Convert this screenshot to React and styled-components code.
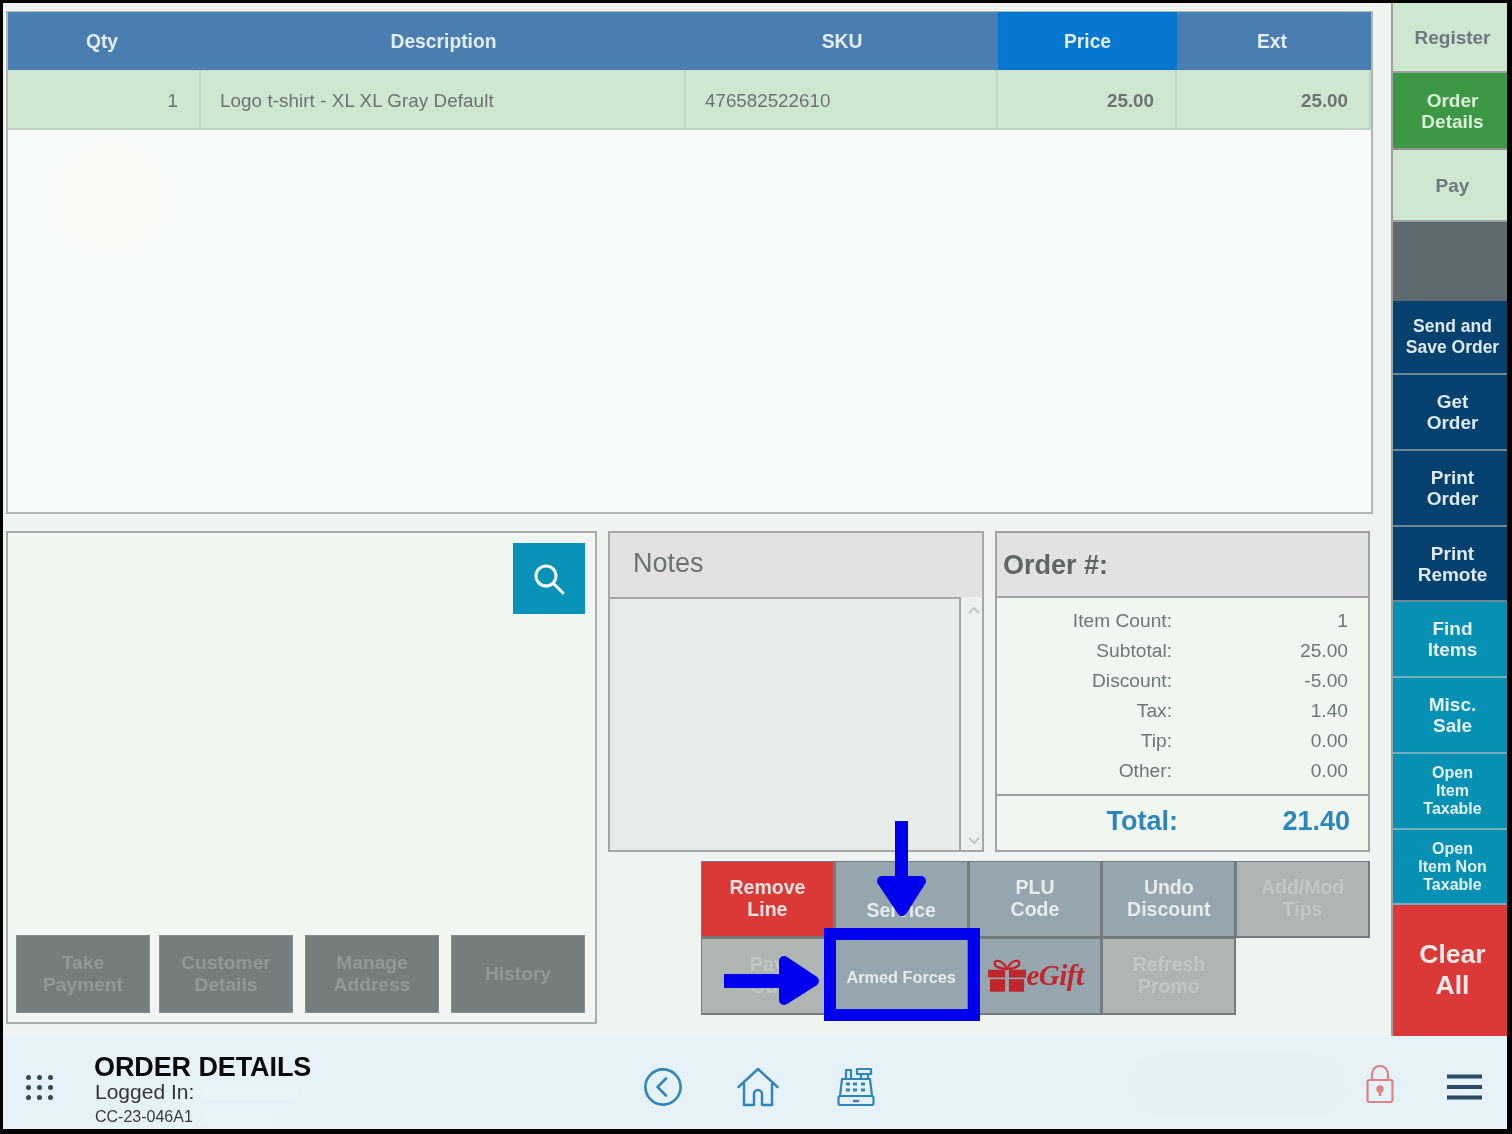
import React from "react";
import styled, { createGlobalStyle } from "styled-components";

const Global = createGlobalStyle`
  html, body { margin: 0; padding: 0; background: #000; }
  * { box-sizing: border-box; }
  body { font-family: "Liberation Sans", Arial, sans-serif; }
`;

const Frame = styled.div`
  position: relative; width: 1512px; height: 1134px; background: #000; overflow: hidden;
  padding: 3px 5px 5px 3px;
`;
const Screen = styled.div`
  height: 100%; display: flex; flex-direction: column; background: #f0f4f1; filter: blur(0.55px);
`;
const Body = styled.div`display: flex; height: 1033px;`;
const Main = styled.main`width: 1388px; padding: 8px 0 0 3px; display: flex; flex-direction: column;`;

const OrderTable = styled.section`
  position: relative; width: 1367px; height: 503px; background: #f8fcf8; border: 2px solid #b3b7b3; border-top-width: 1px; padding-right: 2px;
`;
const Glow = styled.div`
  position: absolute; left: 42px; top: 125px; width: 120px; height: 120px; border-radius: 50%;
  background: radial-gradient(circle, #f8faf3 0%, #f8fbf6 60%, transparent 72%);
`;
const TableRow = styled.div`
  position: relative; display: grid; grid-template-columns: 193px 485px 312px 179px 194px; height: ${p => p.$h}px;
`;
const HeadCell = styled.div`
  display: flex; align-items: center; justify-content: center; color: #e4eef5; font-weight: 700; font-size: 19.3px;
  padding: 2px ${p => p.$shift || 0}px 0 0;
  background: ${p => (p.$active ? "#0577d0" : "#4b7eb0")};
`;
const Cell = styled.div`
  display: flex; align-items: center; background: #cfe6d0; color: #697670; font-size: 18.8px;
  border-right: 2px solid #c3d6c5; border-bottom: 2px solid #c5d2c6; border-top: 1px solid #c9dccb;
  justify-content: ${p => (p.$right ? "flex-end" : "flex-start")};
  padding: ${p => (p.$right ? `2px ${p.$pad}px 0 0` : "2px 0 0 19px")};
  font-weight: ${p => (p.$bold ? 700 : 400)};
  letter-spacing: ${p => p.$track || 0}px;
`;

const Lower = styled.div`display: flex; margin-top: 17px;`;
const SearchPanel = styled.section`
  width: 591px; height: 493px; background: #f1f7f0; border: 2px solid #a9adaa;
  padding: 10px 10px 9px 8px; display: flex; flex-direction: column; justify-content: space-between;
`;
const SearchButton = styled.button`
  align-self: flex-end; width: 72px; height: 71px; border: 0; padding: 0; background: #0892b8; display: flex; align-items: center; justify-content: center;
`;
const PanelActions = styled.div`display: flex;`;
const PanelButton = styled.div`
  width: 134px; height: 78px; background: #757e7d; color: #8f9997; font-size: 19.2px; line-height: 22px; font-weight: 700; padding-bottom: 1px;
  display: flex; align-items: center; justify-content: center; text-align: center; border: 1px solid #868e8c;
  & + & { margin-left: 12px; }
  &:nth-child(2) { margin-left: 9px; }
`;
const RightArea = styled.div`width: 762px; margin-left: 11px;`;
const InfoRow = styled.div`display: flex; gap: 11px; height: 321px;`;
const NotesPanel = styled.section`
  width: 376px; border: 2px solid #a5a9a6; background: #f0f4f1; display: flex; flex-direction: column;
`;
const NotesHead = styled.div`
  height: 64px; flex: none; background: #e1e2e2; color: #6b7270; font-size: 27px; padding: 15px 0 0 23px;
`;
const NotesBody = styled.div`flex: 1; display: flex;`;
const NotesField = styled.div`width: 351px; background: #e8ece9; border: 2px solid #a5a9a6; border-left: 0; border-bottom: 0;`;
const Scroller = styled.div`
  flex: 1; background: #edf1ee; display: flex; flex-direction: column; justify-content: space-between; align-items: center; padding: 9px 0 5px 4px;
`;
const OrderPanel = styled.section`
  width: 375px; border: 2px solid #a0a4a1; background: #f1f7f0; display: flex; flex-direction: column;
`;
const OrderHead = styled.div`
  height: 65px; flex: none; background: #e1e2e2; border-bottom: 2px solid #9ea2a0; color: #5f6664; font-size: 27px; font-weight: 700;
  display: flex; align-items: center; padding: 2px 0 0 6px;
`;
const Lines = styled.div`flex: 1; padding-top: 8px; border-bottom: 2px solid #9ea2a0;`;
const Line = styled.div`
  display: grid; grid-template-columns: 175px 176px; height: 30px; align-items: center; color: #6f7775; font-size: 19.2px;
`;
const LineLabel = styled.span`text-align: right;`;
const LineValue = styled.span`text-align: right;`;
const TotalRow = styled.div`
  height: 54px; flex: none; display: grid; grid-template-columns: 181px 172px; align-items: center; color: #2a86bb; font-size: 27px; font-weight: 700; padding-bottom: 4px;
`;

const ActionGrid = styled.div`
  margin: 9px 0 0 93px; display: grid; grid-template-columns: repeat(5, 133.8px); grid-auto-rows: 77px; width: 669px;
`;
const Action = styled.div`
  display: flex; align-items: center; justify-content: center; text-align: center; font-weight: 700; line-height: 22px;
  border: 2px solid #757b7c; border-width: 1px 2px 2px 1px;
  padding-bottom: 3px;
  color: ${p => ({ red: "#f6e3e2", gray: "#e6ebee", dim: "#c2c7c6" }[p.$tone])};
  background: ${p => ({ red: "#db3838", gray: "#96a6af", dim: "#aeb5b3" }[p.$tone])};
  font-size: ${p => p.$size || 19.5}px;
`;
const ServiceAction = styled(Action)`padding: 21px 0 0;`;
const ArmedAction = styled(Action)`padding: 2px 0 0;`;
const GiftAction = styled(Action)`padding: 0 0 2px 2px;`;
const GiftWord = styled.span`
  font-family: "Liberation Serif", serif; font-style: italic; font-weight: 700; font-size: 29px; color: #c0262c; letter-spacing: -0.5px; line-height: 30px;
`;

const Sidebar = styled.aside`width: 116px; display: flex; flex-direction: column; border-left: 2px solid #9ea3a0;`;
const SideButton = styled.div`
  height: ${p => p.$h}px; flex: none; display: flex; align-items: center; justify-content: center; text-align: center; font-weight: 700;
  font-size: ${p => p.$size || 19}px; line-height: ${p => p.$lh || 21}px; padding-left: 5px;
  color: ${p => ({ light: "#6c7a80", green: "#dcefd8", navy: "#dfe8ee", teal: "#e3f2f6", red: "#fbeaea", dark: "#fff" }[p.$tone])};
  background: ${p => ({ light: "#cfe6d0", green: "#3d9845", navy: "#04416f", teal: "#0690b4", red: "#db3838", dark: "#5f6a6f" }[p.$tone])};
  border-bottom: 2px solid ${p => ({ light: "#9aa39b", green: "#8d928d", navy: "#6e8798", teal: "#77aebe", red: "#db3838", dark: "#5f6a6f" }[p.$tone])};
`;

const Footer = styled.footer`
  position: relative; flex: 1; background: #e6f2f8; display: flex; align-items: center;
`;
const DotGrid = styled.div`
  margin: 10px 0 0 23px; width: 27px; display: grid; grid-template-columns: repeat(3, 5px); gap: 5px 6px;
  i { width: 5px; height: 5px; border-radius: 50%; background: #33485c; display: block; }
`;
const Identity = styled.div`margin: 16px 0 0 41px; width: 300px; display: flex; flex-direction: column; color: #1e2225;`;
const PageTitle = styled.div`font-size: 27px; line-height: 25px; font-weight: 700; color: #0a0a0c; letter-spacing: -0.1px; margin-top: 2px;`;
const Logged = styled.div`font-size: 21px; line-height: 24px; color: #30363a; padding-left: 1px;`;
const Device = styled.div`font-size: 16px; line-height: 24px; color: #35393d; margin-top: 1px; padding-left: 1px;`;
const NavIcons = styled.nav`margin: 8px 0 0 249px; display: flex; align-items: center;`;
const NavSlot = styled.div`width: ${p => p.$w}px; display: flex; justify-content: flex-start;`;
const Status = styled.div`
  position: absolute; left: 1127px; top: 18px; width: 218px; height: 62px; border-radius: 30px; background: #e4f1f5; opacity: 0.7;
`;
const Redact = styled.div`
  position: absolute; left: 200px; top: ${p => p.$top}px; width: ${p => p.$w}px; height: 14px; background: #e9f4f9; border-radius: 6px;
`;
const LockSlot = styled.div`position: absolute; left: 1363px; top: 29px;`;
const BurgerSlot = styled.div`position: absolute; left: 1444px; top: 37px;`;

/* annotation overlay placed over the screenshot */
const Highlight = styled.div`
  position: absolute; left: 824px; top: 928px; width: 156px; height: 93px; border: 12px solid #0000ee;
`;
const Arrow = styled.svg`position: absolute; left: ${p => p.$x}px; top: ${p => p.$y}px;`;

const Back = () => (
  <svg width="40" height="40" viewBox="0 0 40 40" fill="none" stroke="#2f86b8" strokeWidth="2.6">
    <circle cx="20" cy="20" r="17.6" />
    <path d="M23 11.5 14.5 20 23 28.5" strokeLinecap="round" strokeLinejoin="round" />
  </svg>
);
const Home = () => (
  <svg width="42" height="40" viewBox="0 0 42 40" fill="none" stroke="#2f86b8" strokeWidth="2.4" strokeLinejoin="round" strokeLinecap="round">
    <path d="M1.5 20 21 2l19.5 18" />
    <path d="M7 17v21h10V27a4 4 0 0 1 8 0v11h10V17" />
  </svg>
);
const Register = () => (
  <svg width="38" height="40" viewBox="0 0 38 40" fill="none" stroke="#2f86b8" strokeWidth="2.2" strokeLinejoin="round">
    <path d="M3 29 5 12h28l2 17" />
    <rect x="1.5" y="29" width="35" height="9" rx="2" />
    <rect x="9" y="3" width="5" height="9" />
    <rect x="20" y="2" width="14" height="5" />
    <rect x="24" y="7" width="7" height="5" />
    <path d="M9 17h4M16 17h4M24 17h4M9 23h4M16 23h4M24 23h4" strokeWidth="3" />
    <path d="M16 34h6" strokeWidth="2.4" />
  </svg>
);
const Lock = () => (
  <svg width="28" height="38" viewBox="0 0 28 38" fill="none" stroke="#dc8484" strokeWidth="2.2" strokeLinejoin="round">
    <rect x="1.5" y="15" width="25" height="22" rx="2" />
    <path d="M6 15V9a8 8 0 0 1 16 0v6" />
    <circle cx="14" cy="24" r="2.6" fill="#dc8484" />
    <path d="M14 25v6" strokeWidth="2.6" />
  </svg>
);
const Burger = () => (
  <svg width="36" height="28" viewBox="0 0 36 28">
    <path d="M0 3.5h35M0 14h35M0 24.5h35" stroke="#2c4a63" strokeWidth="4.2" />
  </svg>
);
const Search = () => (
  <svg width="34" height="34" viewBox="0 0 34 34" fill="none" stroke="#fff" strokeWidth="3" strokeLinecap="round">
    <circle cx="14" cy="14" r="10" />
    <path d="M21.5 21.5 31 31" />
  </svg>
);
const Gift = () => (
  <svg width="38" height="33" viewBox="0 0 40 34" fill="#c0262c">
    <path d="M0 11h18v8H0zM22 11h18v8H22zM2 21h16v13H2zM22 21h16v13H22z" />
    <path d="M20 10C15 0 7 0 7 4s6 6 13 6Zm0 0C25 0 33 0 33 4s-6 6-13 6Z" fill="none" stroke="#c0262c" strokeWidth="2.4" />
  </svg>
);
const Chevron = ({ up }) => (
  <svg width="12" height="8" viewBox="0 0 12 8" fill="none" stroke="#c3c9c6" strokeWidth="2">
    <path d={up ? "M1 7l5-5 5 5" : "M1 1l5 5 5-5"} />
  </svg>
);

const lines = [
  ["Item Count:", "1"], ["Subtotal:", "25.00"], ["Discount:", "-5.00"],
  ["Tax:", "1.40"], ["Tip:", "0.00"], ["Other:", "0.00"],
];

const side = [
  { t: ["Register"], tone: "light", h: 70 },
  { t: ["Order", "Details"], tone: "green", h: 77 },
  { t: ["Pay"], tone: "light", h: 72 },
  { t: [], tone: "dark", h: 79 },
  { t: ["Send and", "Save Order"], tone: "navy", h: 74, size: 17.5 },
  { t: ["Get", "Order"], tone: "navy", h: 76 },
  { t: ["Print", "Order"], tone: "navy", h: 76 },
  { t: ["Print", "Remote"], tone: "navy", h: 75 },
  { t: ["Find", "Items"], tone: "teal", h: 76 },
  { t: ["Misc.", "Sale"], tone: "teal", h: 76 },
  { t: ["Open", "Item", "Taxable"], tone: "teal", h: 76, size: 16, lh: 18 },
  { t: ["Open", "Item Non", "Taxable"], tone: "teal", h: 75, size: 16, lh: 18 },
  { t: ["Clear", "All"], tone: "red", h: 131, size: 26.5, lh: 31 },
];

const Lines2 = ({ t }) => t.map((x, i) => <React.Fragment key={i}>{i > 0 && <br />}{x}</React.Fragment>);

export default function App() {
  return (
    <Frame>
      <Global />
      <Screen>
        <Body>
          <Main>
            <OrderTable>
              <TableRow $h={58}>
                <HeadCell $shift={5}>Qty</HeadCell>
                <HeadCell>Description</HeadCell>
                <HeadCell>SKU</HeadCell>
                <HeadCell $active>Price</HeadCell>
                <HeadCell $shift={4}>Ext</HeadCell>
              </TableRow>
              <TableRow $h={60}>
                <Cell $right $pad={21}>1</Cell>
                <Cell $track={0.08}>Logo t-shirt - XL XL Gray Default</Cell>
                <Cell>476582522610</Cell>
                <Cell $right $bold $pad={21}>25.00</Cell>
                <Cell $right $bold $pad={21}>25.00</Cell>
              </TableRow>
              <Glow />
            </OrderTable>
            <Lower>
              <SearchPanel>
                <SearchButton aria-label="Search"><Search /></SearchButton>
                <PanelActions>
                  <PanelButton>Take<br />Payment</PanelButton>
                  <PanelButton>Customer<br />Details</PanelButton>
                  <PanelButton>Manage<br />Address</PanelButton>
                  <PanelButton>History</PanelButton>
                </PanelActions>
              </SearchPanel>
              <RightArea>
                <InfoRow>
                  <NotesPanel>
                    <NotesHead>Notes</NotesHead>
                    <NotesBody>
                      <NotesField />
                      <Scroller><Chevron up /><Chevron /></Scroller>
                    </NotesBody>
                  </NotesPanel>
                  <OrderPanel>
                    <OrderHead>Order #:</OrderHead>
                    <Lines>
                      {lines.map(([a, b]) => (
                        <Line key={a}><LineLabel>{a}</LineLabel><LineValue>{b}</LineValue></Line>
                      ))}
                    </Lines>
                    <TotalRow><LineLabel>Total:</LineLabel><LineValue>21.40</LineValue></TotalRow>
                  </OrderPanel>
                </InfoRow>
                <ActionGrid>
                  <Action $tone="red">Remove<br />Line</Action>
                  <ServiceAction $tone="gray">Service</ServiceAction>
                  <Action $tone="gray">PLU<br />Code</Action>
                  <Action $tone="gray">Undo<br />Discount</Action>
                  <Action $tone="dim">Add/Mod<br />Tips</Action>
                  <Action $tone="dim">Pay<br />Out</Action>
                  <ArmedAction $tone="gray" $size={16.3}>Armed Forces</ArmedAction>
                  <GiftAction $tone="gray"><Gift /><GiftWord>eGift</GiftWord></GiftAction>
                  <Action $tone="dim">Refresh<br />Promo</Action>
                </ActionGrid>
              </RightArea>
            </Lower>
          </Main>
          <Sidebar>
            {side.map((s, i) => (
              <SideButton key={i} $tone={s.tone} $h={s.h} $size={s.size} $lh={s.lh}><span><Lines2 t={s.t} /></span></SideButton>
            ))}
          </Sidebar>
        </Body>
        <Footer>
          <DotGrid>{Array.from({ length: 9 }, (_, i) => <i key={i} />)}</DotGrid>
          <Identity>
            <PageTitle>ORDER DETAILS</PageTitle>
            <Logged>Logged In:</Logged>
            <Device>CC-23-046A1</Device>
          </Identity>
          <NavIcons>
            <NavSlot $w={94}><Back /></NavSlot>
            <NavSlot $w={100}><Home /></NavSlot>
            <NavSlot $w={40}><Register /></NavSlot>
          </NavIcons>
          <Redact $top={50} $w={96} />
          <Redact $top={76} $w={70} />
          <Status />
          <LockSlot><Lock /></LockSlot>
          <BurgerSlot><Burger /></BurgerSlot>
        </Footer>
      </Screen>
      <Highlight />
      <Arrow $x={870} $y={821} width="64" height="96" viewBox="0 0 64 96">
        <path d="M25 0h13v58h-13z" fill="#0000ee" />
        <path d="M12 60h39L32 90Z" fill="#0000ee" stroke="#0000ee" strokeWidth="10" strokeLinejoin="round" />
      </Arrow>
      <Arrow $x={724} $y={950} width="100" height="60" viewBox="0 0 100 60">
        <path d="M0 24h60v14H0z" fill="#0000ee" />
        <path d="M60 11v39L90 31Z" fill="#0000ee" stroke="#0000ee" strokeWidth="10" strokeLinejoin="round" />
      </Arrow>
    </Frame>
  );
}
